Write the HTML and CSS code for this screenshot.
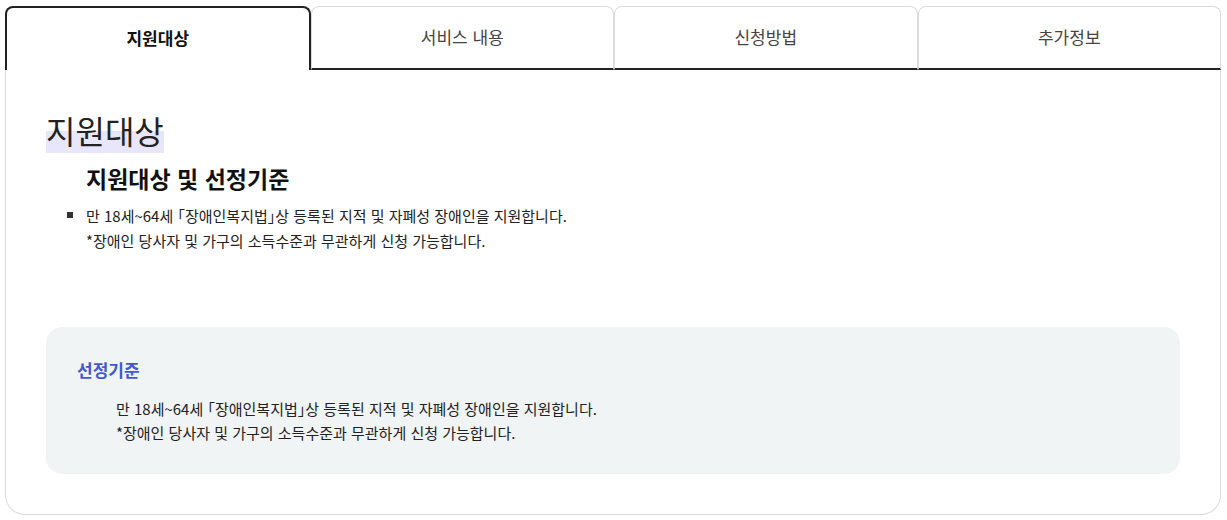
FILE: index.html
```html
<!DOCTYPE html>
<html lang="ko">
<head>
<meta charset="utf-8">
<link rel="stylesheet" href="styles.css">
</head>
<body>
<div class="wrap">
  <div class="tabs">
    <div class="tab active">지원대상</div>
    <div class="tab">서비스 내용</div>
    <div class="tab">신청방법</div>
    <div class="tab">추가정보</div>
  </div>
  <div class="panel">
    <h2 class="title"><span class="hl">지원대상</span></h2>
    <h3 class="subtitle">지원대상 및 선정기준</h3>
    <ul class="list">
      <li>만 18세~64세 <span class="bk">「</span>장애인복지법<span class="bk">」</span>상 등록된 지적 및 자폐성 장애인을 지원합니다.<br>*장애인 당사자 및 가구의 소득수준과 무관하게 신청 가능합니다.</li>
    </ul>
    <div class="box">
      <div class="box-title">선정기준</div>
      <p class="box-text">만 18세~64세 <span class="bk">「</span>장애인복지법<span class="bk">」</span>상 등록된 지적 및 자폐성 장애인을 지원합니다.<br>*장애인 당사자 및 가구의 소득수준과 무관하게 신청 가능합니다.</p>
    </div>
  </div>
</div>
</body>
</html>
```

FILE: styles.css
```css
* { box-sizing: border-box; }
html, body { margin: 0; padding: 0; background: #fff; }
body {
  font-family: "Noto Sans CJK KR", "Noto Sans", sans-serif;
  color: #222;
}
.wrap {
  padding: 6px 6px 0 5px;
}
.tabs {
  display: flex;
  height: 64px;
}
.tab {
  flex: 1;
  display: flex;
  align-items: center;
  justify-content: center;
  font-size: 17px;
  color: #444;
  border: 1px solid #dcdcdc;
  border-bottom: 2px solid #222;
  border-radius: 8px 8px 0 0;
  padding-bottom: 2px;
}
.tab.active {
  border: 2px solid #222;
  border-bottom: none;
  font-weight: 700;
  color: #111;
  padding-bottom: 4px;
}
.panel {
  border: 1px solid #dcdcdc;
  border-top: none;
  border-radius: 0 0 20px 20px;
  padding: 40px 40px 40px 40px;
}
.title {
  margin: 0;
  font-size: 32px;
  font-weight: 400;
  line-height: 40px;
  color: #222;
}
.hl {
  background: linear-gradient(transparent 52%, #e8e6fa 52%);
}
.subtitle {
  margin: 12px 0 0 40px;
  font-size: 23px;
  font-weight: 700;
  line-height: 32px;
  color: #111;
}
.list {
  margin: 9px 0 0 0;
  padding: 0 0 0 40px;
  list-style: none;
}
.list li {
  position: relative;
  font-size: 15px;
  line-height: 25px;
  color: #222;
}
.list li::before {
  content: "";
  position: absolute;
  left: -19px;
  top: 9px;
  width: 6px;
  height: 6px;
  background: #333;
}
.bk { font-feature-settings: "halt" 1; }
.box {
  margin-top: 74px;
  background: #f1f4f5;
  border-radius: 16px;
  padding: 31px 31px 29px 31px;
}
.box-title {
  font-size: 17px;
  font-weight: 700;
  line-height: 24px;
  color: #4257d6;
}
.box-text {
  margin: 15px 0 0 39px;
  font-size: 15px;
  line-height: 24px;
  color: #222;
}
```
